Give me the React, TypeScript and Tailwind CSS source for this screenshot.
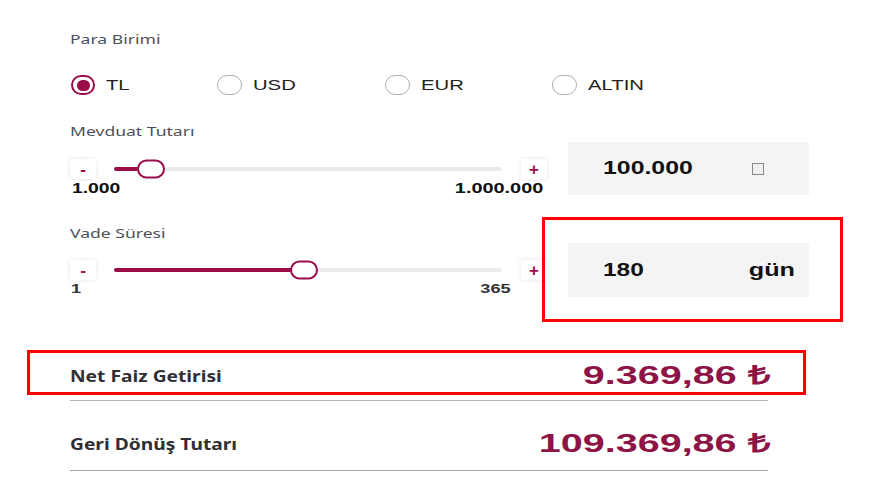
import { useState } from "react";

const MAROON = "bg-[#9a0d49]";

type Currency = "TL" | "USD" | "EUR" | "ALTIN";

const currencies: { key: Currency; width: string }[] = [
  { key: "TL", width: "w-[146px]" },
  { key: "USD", width: "w-[168px]" },
  { key: "EUR", width: "w-[167px]" },
  { key: "ALTIN", width: "w-[120px]" },
];

function Label({ children }: { children: string }) {
  return (
    <p className="text-[13px] leading-[18px] text-[#4d525c] font-['Noto_Sans',sans-serif]">
      <span className="inline-block origin-left scale-x-[1.35]">{children}</span>
    </p>
  );
}

function Radio({ label, active, onClick }: { label: string; active: boolean; onClick: () => void }) {
  return (
    <button onClick={onClick} className="flex items-center h-[22px]">
      {active ? (
        <span className="w-[24px] h-[20px] rounded-full border-2 border-[#9a0d49] flex items-center justify-center">
          <span className={`w-[13px] h-[11px] rounded-full ${MAROON}`} />
        </span>
      ) : (
        <span className="w-[25px] h-[20px] rounded-full border-[1.5px] border-[#adadad]" />
      )}
      <span className="ml-[11px] text-[15px] text-[#222] font-['Liberation_Sans',Arial,sans-serif] inline-block origin-left scale-x-[1.35]">
        {label}
      </span>
    </button>
  );
}

function StepButton({ children }: { children: string }) {
  return (
    <span className="w-[26px] h-[20px] bg-white shadow-[0_0_4px_rgba(150,40,80,0.15)] flex items-center justify-center text-[#9a0d49] text-[17px] font-bold leading-none font-['Liberation_Sans',Arial,sans-serif]">
      {children}
    </span>
  );
}

function Slider({ percent }: { percent: number }) {
  return (
    <div className="relative ml-[18px] w-[388px] h-[4px] rounded-full bg-[#ebebeb]">
      <div className={`h-full rounded-full ${MAROON}`} style={{ width: `${percent}%` }} />
      <span
        className="absolute top-1/2 w-[28px] h-[19px] -translate-x-1/2 -translate-y-1/2 rounded-full bg-white border-[2.5px] border-[#9a0d49]"
        style={{ left: `${percent}%` }}
      />
    </div>
  );
}

const numText =
  "font-['Liberation_Sans',Arial,sans-serif] font-bold text-[#111] inline-block";

export default function App() {
  const [currency, setCurrency] = useState<Currency>("TL");

  return (
    <div className="w-[880px] h-[495px] bg-white overflow-hidden">
      <div className="pl-[70px] pt-[30px]">
        <Label>Para Birimi</Label>

        <div className="mt-[26px] flex pl-[1px]">
          {currencies.map((c) => (
            <div key={c.key} className={c.width}>
              <Radio label={c.key} active={currency === c.key} onClick={() => setCurrency(c.key)} />
            </div>
          ))}
        </div>

        <div className="mt-[26px]">
          <Label>Mevduat Tutarı</Label>
        </div>

        <div className="flex items-start">
          <div className="w-[477px]">
            <div className="mt-[18px] h-[22px] flex items-center">
              <StepButton>-</StepButton>
              <Slider percent={9.5} />
              <span className="ml-[19px]">
                <StepButton>+</StepButton>
              </span>
            </div>
            <div className="w-[473px] pl-[2px] flex justify-between text-[14px] leading-[16px]">
              <span className={`${numText} origin-left scale-x-[1.38]`}>1.000</span>
              <span className={`${numText} origin-right scale-x-[1.42]`}>1.000.000</span>
            </div>
          </div>
          <div className="ml-[21px] mt-[2px] w-[241px] h-[53px] bg-[#f4f4f4] flex items-center pl-[35px]">
            <span className={`${numText} text-[18px] origin-left scale-x-[1.38]`}>100.000</span>
            <span className="ml-auto mr-[45px] w-[12px] h-[12px] border border-[#8a8a8a] bg-[#f0f0f0]" />
          </div>
        </div>

        <div className="mt-[28px]">
          <Label>Vade Süresi</Label>
        </div>

        <div className="flex items-start">
          <div className="w-[477px]">
            <div className="mt-[17px] h-[22px] flex items-center">
              <StepButton>-</StepButton>
              <Slider percent={49} />
              <span className="ml-[19px]">
                <StepButton>+</StepButton>
              </span>
            </div>
            <div className="w-[441px] pl-[1px] flex justify-between text-[13px] leading-[16px]">
              <span className={`${numText} text-[#333] origin-left scale-x-[1.4]`}>1</span>
              <span className={`${numText} text-[#333] origin-right scale-x-[1.4]`}>365</span>
            </div>
          </div>
          <div className="relative ml-[21px] mt-[1px] w-[241px] h-[54px] bg-[#f4f4f4] flex items-center pl-[35px] pr-[14px]">
            <span className={`${numText} text-[18px] origin-left scale-x-[1.36]`}>180</span>
            <span className={`${numText} ml-auto text-[18px] text-[#3a3a3a] origin-right scale-x-[1.4]`}>gün</span>
            <div className="absolute left-[-26px] top-[-26px] w-[301px] h-[105px] border-[3px] border-[#ff0000]" />
          </div>
        </div>

        <div className="relative mt-[54px] w-[698px] h-[50px] border-b border-[#b5b5b5] flex items-center justify-between">
          <span className="text-[16px] font-bold text-[#2f2f35] font-['Noto_Sans',sans-serif] inline-block origin-left scale-x-[1.2]">
            Net Faiz Getirisi
          </span>
          <span className="text-[26px] font-bold text-[#8d1445] font-['Liberation_Sans',Arial,sans-serif] inline-block origin-right scale-x-[1.52] mr-[-2px]">
            9.369,86 ₺
          </span>
          <div className="absolute left-[-43px] top-[-1px] w-[779px] h-[45px] border-[3px] border-[#ff0000]" />
        </div>

        <div className="w-[698px] h-[70px] pt-[16px] border-b border-[#a8a8a8] flex items-center justify-between">
          <span className="text-[16px] font-bold text-[#2f2f35] font-['Noto_Sans',sans-serif] inline-block origin-left scale-x-[1.2]">
            Geri Dönüş Tutarı
          </span>
          <span className="text-[26px] font-bold text-[#8d1445] font-['Liberation_Sans',Arial,sans-serif] inline-block origin-right scale-x-[1.52] mr-[-2px]">
            109.369,86 ₺
          </span>
        </div>
      </div>
    </div>
  );
}
